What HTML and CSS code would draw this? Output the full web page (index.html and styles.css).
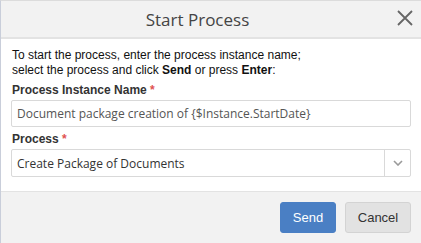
FILE: index.html
```html
<!DOCTYPE html>
<html lang="en">
<head>
    <meta charset="UTF-8">
    <title>Start Process</title>
    <link rel="stylesheet" href="styles.css">
</head>
<body>
    <div class="dialog">
        <div class="dialog_header">
            <span class="dialog_title">Start Process</span>
            <span class="dialog_close">
                <svg width="16" height="16" viewBox="0 0 16 16"><path d="M1 1 L15 15 M15 1 L1 15" stroke="#666" stroke-width="1.8" fill="none"/></svg>
            </span>
        </div>

        <div class="dialog_body">
            <p class="hint">To start the process, enter the process instance name;<br>select the process and click <b>Send</b> or press <b>Enter</b>:</p>

            <label class="field_label">Process Instance Name <span class="required">*</span></label>
            <div class="text_input">Document package creation of {$Instance.StartDate}</div>

            <label class="field_label">Process <span class="required">*</span></label>
            <div class="select_input">
                <span class="select_value">Create Package of Documents</span>
                <span class="select_arrow">
                    <svg width="10" height="6" viewBox="0 0 10 6"><path d="M1 1 L5 5 L9 1" stroke="#9a9a9a" stroke-width="1.6" fill="none"/></svg>
                </span>
            </div>
        </div>

        <div class="dialog_footer">
            <button class="btn btn_send">Send</button>
            <button class="btn btn_cancel">Cancel</button>
        </div>
    </div>
</body>
</html>
```

FILE: styles.css
```css
body {
    margin: 0;
    background: #fff;
    font-family: 'Liberation Sans', Arial, sans-serif;
}

.dialog {
    width: 421px;
    height: 243px;
    box-sizing: border-box;
    border-left: 1px solid #c9ceda;
    border-top: 1px solid #dcdcdc;
    display: flex;
    flex-direction: column;
    background: #fff;
}

/* Header */
.dialog_header {
    height: 36px;
    background: #f2f2f2;
    border-bottom: 2px solid #e3e3e3;
    display: flex;
    align-items: center;
    justify-content: center;
    padding-right: 27px;
    position: relative;
}

.dialog_title {
    font-family: 'Open Sans', sans-serif;
    font-size: 17px;
    color: #444;
}

.dialog_close {
    position: absolute;
    right: 8px;
    top: 9px;
    line-height: 0;
}

/* Body */
.dialog_body {
    flex: 1;
    padding: 9px 10px 0 10px;
}

.hint {
    margin: 0 0 4px 1px;
    font-size: 12px;
    line-height: 15px;
    color: #111;
}

.field_label {
    display: block;
    font-size: 12px;
    font-weight: bold;
    color: #333;
    line-height: 16px;
    margin: 0 0 2px 1px;
}

.required {
    color: #e05252;
}

.text_input,
.select_input {
    height: 27px;
    box-sizing: border-box;
    border: 1px solid #d9d9d9;
    border-radius: 2px;
    font-family: 'Open Sans', sans-serif;
    font-size: 12px;
    color: #555;
    display: flex;
    align-items: center;
}

.text_input {
    padding-left: 5px;
    margin-bottom: 4px;
}

.select_input {
    height: 28px;
}

.select_value {
    flex: 1;
    padding-left: 5px;
    color: #333;
}

.select_arrow {
    width: 25px;
    height: 100%;
    border-left: 1px solid #d9d9d9;
    display: flex;
    align-items: center;
    justify-content: center;
}

/* Footer */
.dialog_footer {
    height: 52px;
    box-sizing: border-box;
    background: #f2f2f2;
    border-top: 1px solid #e3e3e3;
    display: flex;
    justify-content: flex-end;
    align-items: center;
    gap: 9px;
    padding: 0 10px 0 0;
}

.btn {
    height: 31px;
    border-radius: 3px;
    font-family: 'Liberation Sans', Arial, sans-serif;
    font-size: 13px;
    padding: 0;
}

.btn_send {
    width: 56px;
    background: #4a7fc4;
    border: 1px solid #4a7fc4;
    color: #fff;
}

.btn_cancel {
    width: 66px;
    background: #e2e2e2;
    border: 1px solid #d3d3d3;
    color: #333;
}
```
